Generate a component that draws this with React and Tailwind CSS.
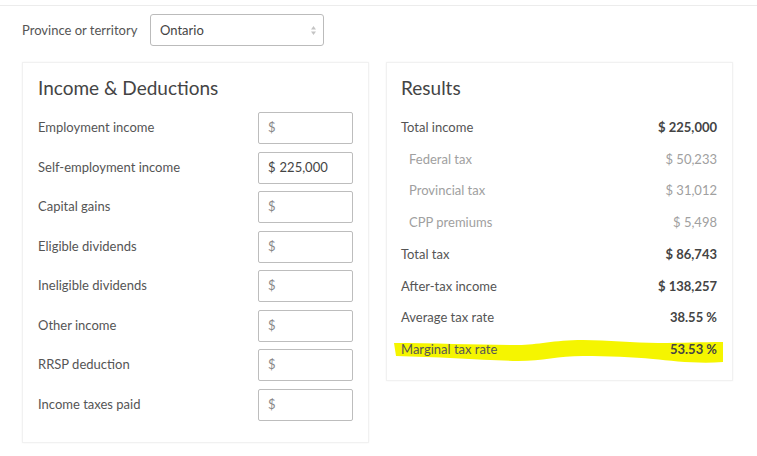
import React from 'react';

const inputs = [
    { label: 'Employment income', value: '' },
    { label: 'Self-employment income', value: '225,000' },
    { label: 'Capital gains', value: '' },
    { label: 'Eligible dividends', value: '' },
    { label: 'Ineligible dividends', value: '' },
    { label: 'Other income', value: '' },
    { label: 'RRSP deduction', value: '' },
    { label: 'Income taxes paid', value: '' },
];

const results = [
    { label: 'Total income', value: '$ 225,000', strong: true },
    { label: 'Federal tax', value: '$ 50,233', sub: true },
    { label: 'Provincial tax', value: '$ 31,012', sub: true },
    { label: 'CPP premiums', value: '$ 5,498', sub: true },
    { label: 'Total tax', value: '$ 86,743', strong: true },
    { label: 'After-tax income', value: '$ 138,257', strong: true },
    { label: 'Average tax rate', value: '38.55 %', strong: true },
    { label: 'Marginal tax rate', value: '53.53 %', strong: true, highlight: true },
];

// Yellow marker stroke behind the last row
const Highlight = () => (
    <svg className="absolute left-[-8px] top-0 w-[332px] h-[32px] pointer-events-none" viewBox="0 0 332 32">
        <path
            d="M1 9 C40 9 90 11 125 11 C145 11 160 6 190 6 C215 6 240 9 265 9 C290 9 310 8 330 8 L330 28 C305 30 280 27 260 25 C240 23 215 22 190 22 C165 22 150 27 125 27 C90 26 45 23 3 22 Z"
            fill="#f5f500"
        />
    </svg>
);

export default function App() {
    return (
        <div className="w-[757px] h-[456px] bg-white overflow-hidden text-[#555]" style={{ fontFamily: 'Lato, "Open Sans", sans-serif' }}>
            <div className="h-[6px] border-b border-[#ececec]" />

            {/* Province selector */}
            <div className="flex items-center pl-[22px] pt-[8px] gap-[17px]">
                <span className="text-[13px] text-[#555] w-[111px] whitespace-nowrap pt-[2px]">Province or territory</span>
                <div className="w-[174px] h-[32px] border border-[#bbb] rounded-[3px] flex items-center justify-between pl-[9px] pr-[6px]">
                    <span className="text-[13px] text-[#444] pt-[2px]">Ontario</span>
                    <svg width="7" height="11" viewBox="0 0 7 11">
                        <path d="M3.5 1 L6 4.5 H1 Z" fill="#c4c4c4" />
                        <path d="M3.5 10 L6 6.5 H1 Z" fill="#c4c4c4" />
                    </svg>
                </div>
            </div>

            <div className="flex items-start gap-[17px] pl-[22px] pt-[16px]">
                {/* Income & Deductions */}
                <div className="w-[347px] h-[381px] border border-[#f1f1f1] shadow-[0_0_2px_rgba(0,0,0,0.05)] px-[15px] pt-[13px]">
                    <h2 className="text-[19px] text-[#444] leading-[24px] mb-[12px]">Income &amp; Deductions</h2>
                    <div className="flex flex-col gap-[7.5px]">
                        {inputs.map((row) => (
                            <div key={row.label} className="flex items-center justify-between">
                                <span className="text-[13px] text-[#555]">{row.label}</span>
                                <div className="w-[95px] h-[32px] border border-[#bdbdbd] rounded-[2px] flex items-center pl-[9px] text-[13px] text-[#444]">
                                    <span className={row.value ? 'text-[#444]' : 'text-[#888]'}>$</span>
                                    {row.value && <span className="ml-[4px]">{row.value}</span>}
                                </div>
                            </div>
                        ))}
                    </div>
                </div>

                {/* Results */}
                <div className="w-[347px] h-[319px] border border-[#f1f1f1] shadow-[0_0_2px_rgba(0,0,0,0.05)] pl-[14px] pr-[15px] pt-[13px]">
                    <h2 className="text-[19px] text-[#444] leading-[24px] mb-[12px]">Results</h2>
                    <div className="flex flex-col">
                        {results.map((row) => (
                            <div key={row.label} className="relative h-[31.7px] flex items-center justify-between">
                                {row.highlight && <Highlight />}
                                <span className={`relative text-[13px] ${row.sub ? 'pl-[8px] text-[#a0a0a0]' : 'text-[#555]'}`}>{row.label}</span>
                                <span className={`relative text-[13px] ${row.sub ? 'text-[#a0a0a0]' : 'font-bold text-[#444]'}`}>{row.value}</span>
                            </div>
                        ))}
                    </div>
                </div>
            </div>
        </div>
    );
}
